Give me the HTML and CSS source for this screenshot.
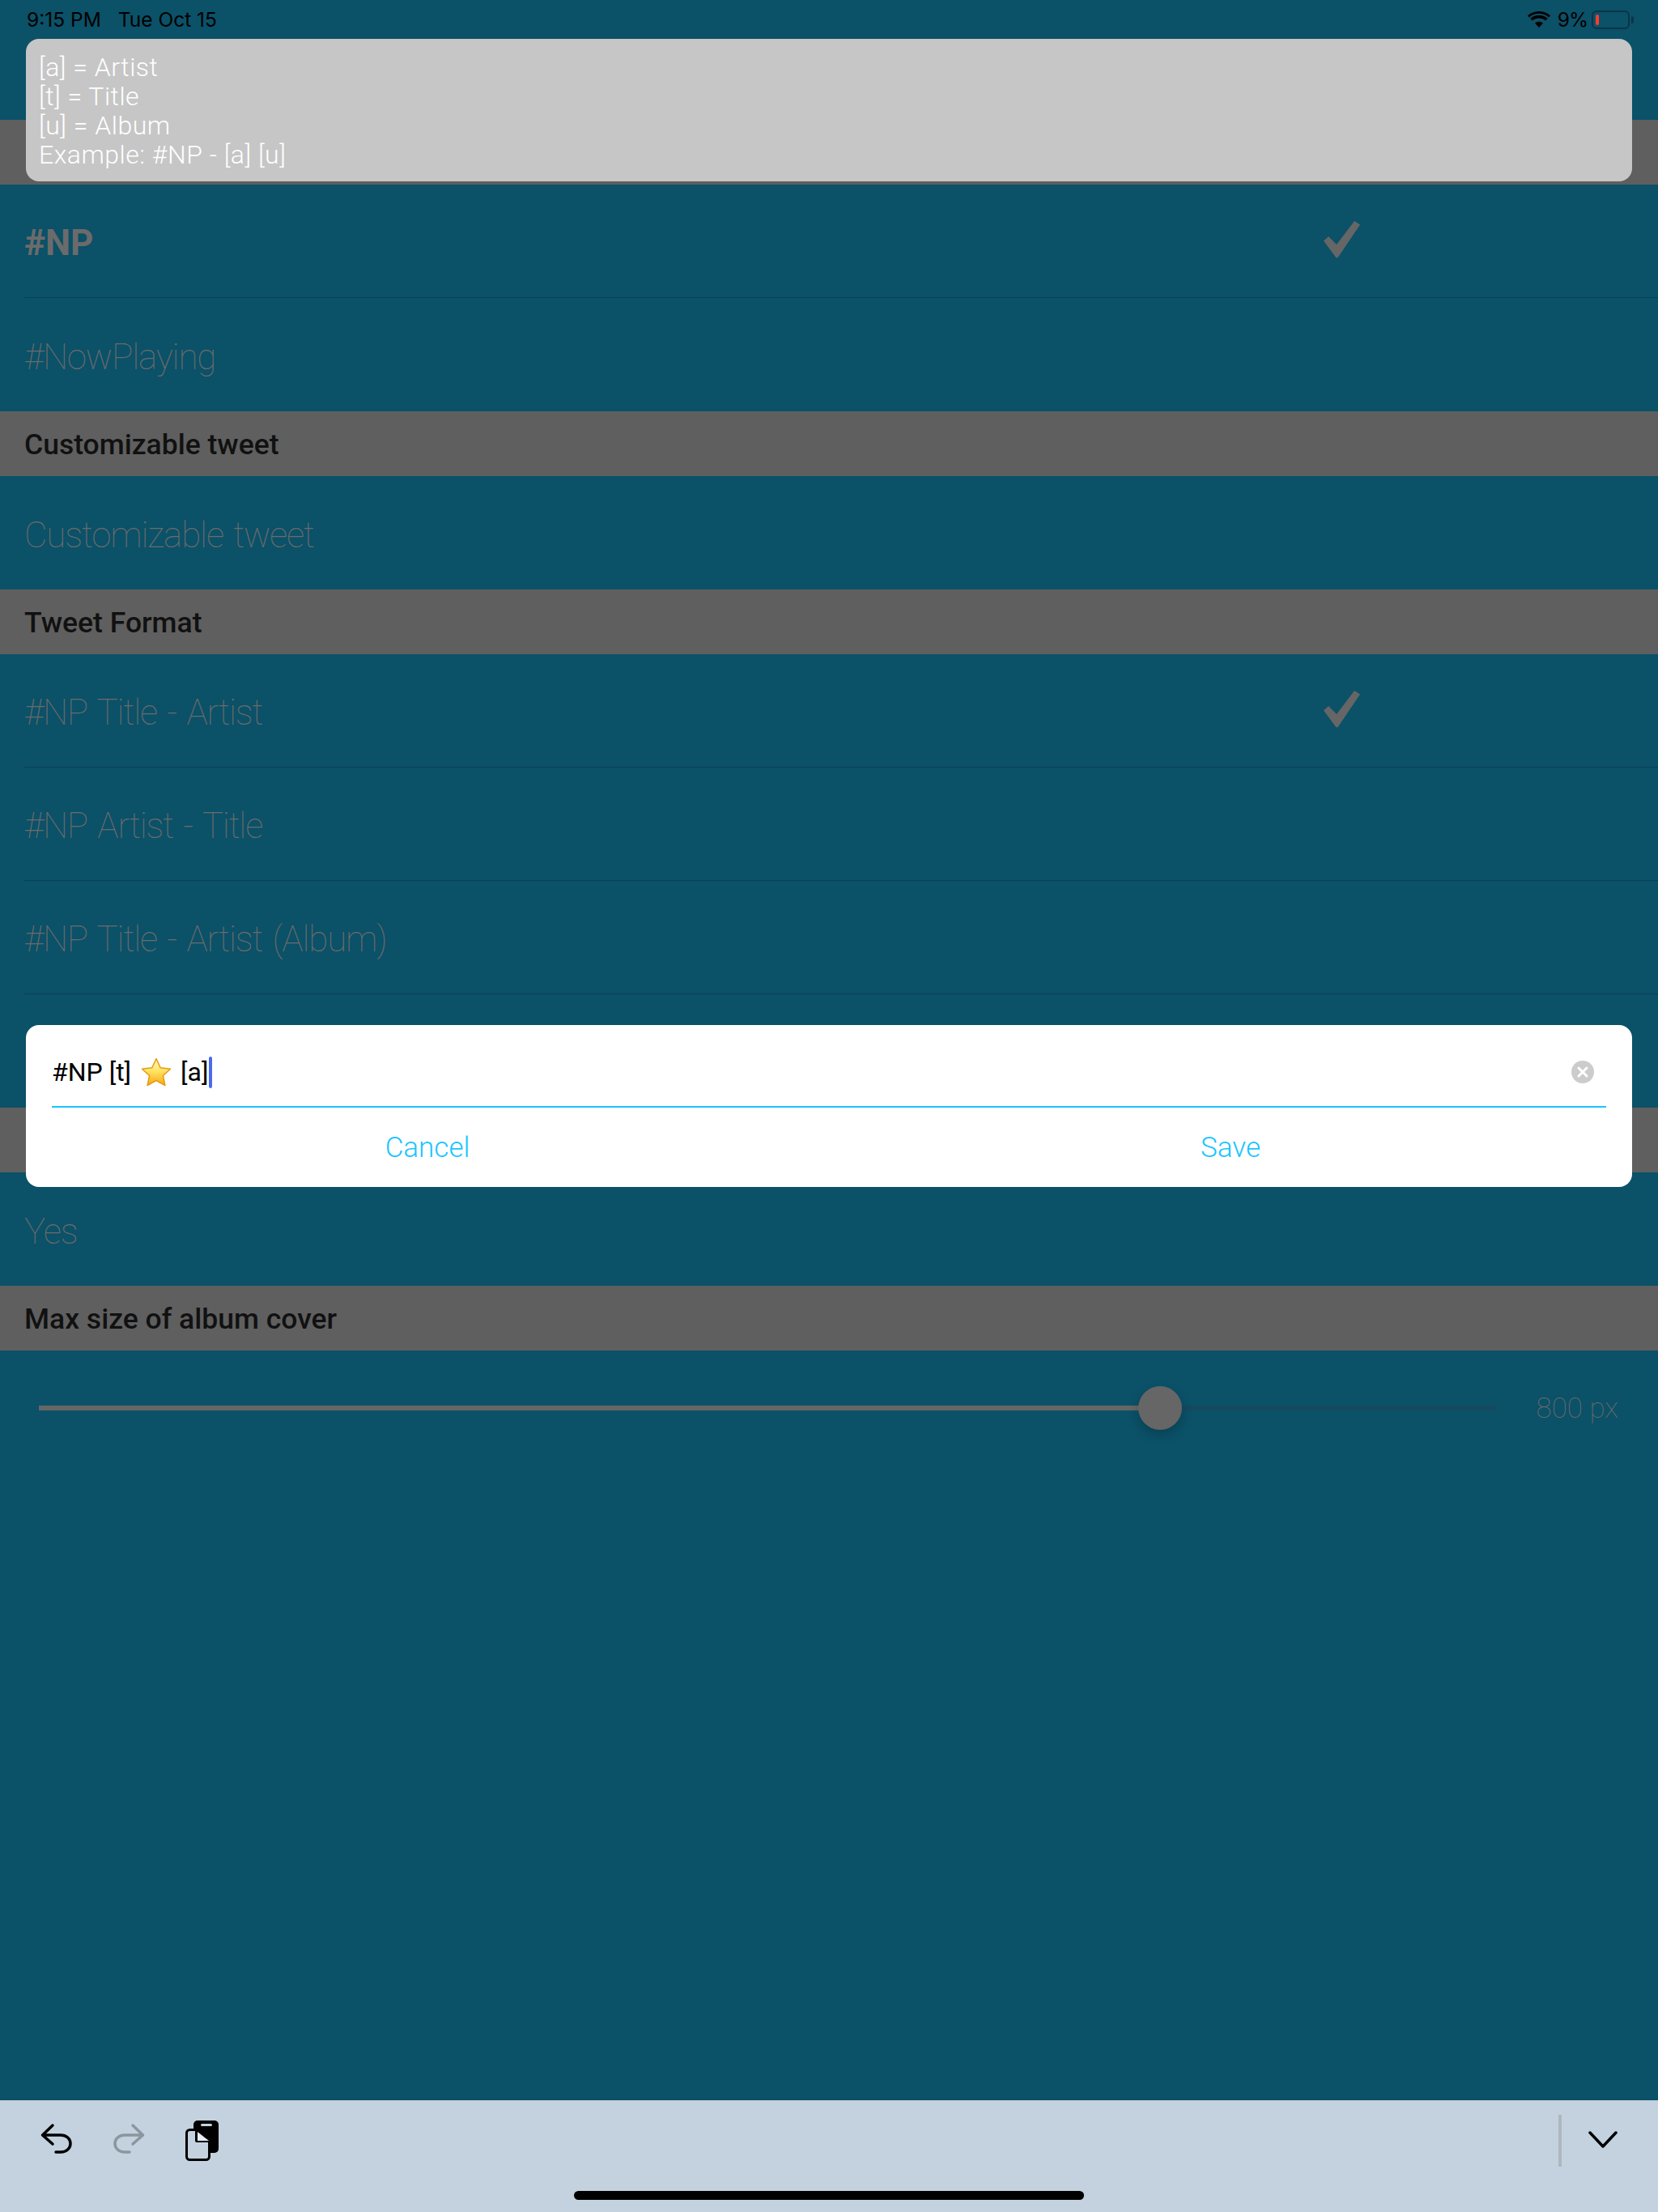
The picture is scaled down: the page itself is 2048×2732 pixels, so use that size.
FILE: index.html
```html
<!DOCTYPE html>
<html lang="en">
<head>
    <meta charset="UTF-8">
    <meta name="viewport" content="width=device-width, initial-scale=1.0">
    <title>Tweet settings</title>
    <link rel="stylesheet" href="styles.css">
</head>
<body>
    <div class="page">
        <div class="topbar">
            <div class="status">
                <span class="status-time">9:15 PM</span>
                <span class="status-date">Tue Oct 15</span>
                <span class="status-right">
                    <svg class="wifi" viewBox="0 0 28 20"><path d="M14 20l-5-5.400c2.900-2.500 7.100-2.500 10 0zM5.800 11.500L3.300 8.700c6-5.200 15.400-5.200 21.400 0l-2.500 2.800c-4.700-4-11.700-4-16.400 0zM0 5.300C7.900-1.800 20.100-1.800 28 5.300l-1.900 2.100C19.300 1.300 8.700 1.300 1.900 7.400z"/></svg>
                    <span class="battery-text">9%</span>
                    <span class="battery"><span class="battery-level"></span></span>
                    <span class="battery-nub"></span>
                </span>
            </div>
        </div>

        <div class="section-head"></div>
        <div class="row row-line">
            <span class="row-text row-text-bold">#NP</span>
            <svg class="check" viewBox="0 0 45 46"><path d="M0 24.500L6 19l10 10L38 0l7 4.500L18 44.500a2 2 0 0 1-3 .3z"/></svg>
        </div>
        <div class="row">
            <span class="row-text">#NowPlaying</span>
        </div>

        <div class="section-head">Customizable tweet</div>
        <div class="row">
            <span class="row-text">Customizable tweet</span>
        </div>

        <div class="section-head">Tweet Format</div>
        <div class="row row-line">
            <span class="row-text">#NP Title - Artist</span>
            <svg class="check" viewBox="0 0 45 46"><path d="M0 24.500L6 19l10 10L38 0l7 4.500L18 44.500a2 2 0 0 1-3 .3z"/></svg>
        </div>
        <div class="row row-line">
            <span class="row-text">#NP Artist - Title</span>
        </div>
        <div class="row row-line">
            <span class="row-text">#NP Title - Artist (Album)</span>
        </div>
        <div class="row"></div>

        <div class="section-head"></div>
        <div class="row">
            <span class="row-text">Yes</span>
        </div>

        <div class="section-head">Max size of album cover</div>
        <div class="slider-row">
            <div class="slider">
                <div class="slider-fill"></div>
                <div class="slider-rest"></div>
                <div class="slider-thumb"></div>
            </div>
            <span class="slider-value">800 px</span>
        </div>

        <div class="toolbar">
            <div class="toolbar-main">
                <svg class="tool-icon" viewBox="0 0 44 44"><path d="M17 5L4.500 17 17 28M5 17h22c7 0 12 4.500 12 10.500S34 38 27 38h-6"/></svg>
                <svg class="tool-icon tool-icon-off" viewBox="0 0 44 44"><path d="M27 5l12.500 12L27 28M39 17H17C10 17 5 21.500 5 27.500S10 38 17 38h6"/></svg>
                <svg class="paste-icon" viewBox="0 0 44 52">
                    <rect x="11" y="1" width="31" height="40" rx="5" fill="#000"/>
                    <rect x="20" y="5" width="14" height="3" rx="1.500" fill="#c3d2de"/>
                    <rect x="2.500" y="12.500" width="28" height="37" rx="4" fill="#c3d2de" stroke="#000" stroke-width="3"/>
                    <path d="M13 11h19v17H15a2 2 0 0 1-2-2z" fill="#000"/>
                    <path d="M16 15l14 11H16z" fill="#e8eef3"/>
                </svg>
                <span class="toolbar-space"></span>
                <span class="toolbar-divider"></span>
                <svg class="chevron" viewBox="0 0 36 22"><path d="M2 2l16 17L34 2"/></svg>
            </div>
            <div class="home-bar"></div>
        </div>

        <!-- Tooltip over the list -->
        <div class="hint">
            <div>[a] = Artist</div>
            <div>[t] = Title</div>
            <div>[u] = Album</div>
            <div>Example: #NP - [a] [u]</div>
        </div>

        <!-- Edit dialog -->
        <div class="dialog">
            <div class="dialog-input">
                <span class="input-text">#NP [t]</span>
                <svg class="star" viewBox="0 0 38 36">
                    <defs>
                        <linearGradient id="starFill" x1="0" y1="0" x2="0" y2="1">
                            <stop offset="0" stop-color="#fff6c8"/>
                            <stop offset="0.45" stop-color="#ffe566"/>
                            <stop offset="1" stop-color="#f9a80f"/>
                        </linearGradient>
                    </defs>
                    <path d="M19 1.500l5.200 11.300 12.300 1.400-9.100 8.300 2.500 12.100L19 28.500 8.100 34.600l2.500-12.100-9.100-8.300 12.300-1.400z" fill="url(#starFill)" stroke="#e59a12" stroke-width="1.500" stroke-linejoin="round"/>
                </svg>
                <span class="input-text">[a]</span>
                <span class="caret"></span>
                <span class="input-space"></span>
                <svg class="clear" viewBox="0 0 28 28"><circle cx="14" cy="14" r="14" fill="#ccc"/><path d="M9 9l10 10M19 9L9 19" stroke="#fff" stroke-width="3" stroke-linecap="round"/></svg>
            </div>
            <div class="dialog-buttons">
                <button class="dialog-btn">Cancel</button>
                <button class="dialog-btn">Save</button>
            </div>
        </div>
    </div>
</body>
</html>
```

FILE: styles.css
```css
* {
    box-sizing: border-box;
}

body {
    margin: 0;
    background: #0b5168;
    font-family: Roboto, "Liberation Sans", sans-serif;
}

.page {
    position: relative;
    display: flex;
    flex-direction: column;
    width: 2048px;
    height: 2732px;
    overflow: hidden;
    background: #0b5168;
}

.topbar {
    height: 148px;
}

.status {
    display: flex;
    align-items: center;
    height: 48px;
    padding-left: 33px;
    font-family: Inter, Roboto, sans-serif;
    font-size: 24.500px;
    color: #000;
}

.status-date {
    margin-left: 21px;
}

.status-right {
    display: flex;
    align-items: center;
    margin-left: auto;
    padding-right: 30px;
}

.wifi {
    width: 28px;
    height: 20px;
}

.battery-text {
    margin-left: 9px;
    letter-spacing: -1px;
}

.battery {
    display: block;
    width: 47px;
    height: 23px;
    margin-left: 5px;
    padding: 3px;
    border: 2px solid #0a3547;
    border-radius: 6px;
}

.battery-level {
    display: block;
    width: 4px;
    height: 100%;
    border-radius: 2px;
    background: #ff3b30;
}

.battery-nub {
    width: 3px;
    height: 9px;
    margin-left: 2px;
    border-radius: 0 3px 3px 0;
    background: #0a3547;
}

.section-head {
    flex: none;
    height: 80px;
    padding-left: 30px;
    background: #5f5f5f;
    font-size: 35.500px;
    font-weight: 500;
    line-height: 82px;
    color: #111;
}

.row {
    flex: none;
    display: flex;
    align-items: center;
    height: 140px;
    margin-left: 30px;
    padding-right: 368px;
}

.row-line {
    border-bottom: 1px solid #0a3f54;
}

.row-text {
    flex: 1;
    margin-top: 5px;
    font-size: 44px;
    font-weight: 100;
    letter-spacing: -1.200px;
    word-spacing: 3px;
    color: #6b6b6b;
}

.row-text-bold {
    font-weight: 700;
    letter-spacing: 0;
}

.check {
    width: 45px;
    height: 46px;
    margin-top: -4px;
    fill: #666;
}

.slider-row {
    flex: none;
    display: flex;
    align-items: center;
    height: 142px;
    padding: 0 49px 0 48px;
}

.slider {
    position: relative;
    display: flex;
    align-items: center;
    width: 1801px;
    height: 54px;
}

.slider-fill {
    width: 1385px;
    height: 6px;
    background: #666;
}

.slider-rest {
    flex: 1;
    height: 6px;
    border-radius: 0 3px 3px 0;
    background: #15495e;
}

.slider-thumb {
    position: absolute;
    top: 0;
    left: 1358px;
    width: 54px;
    height: 54px;
    border-radius: 50%;
    background: #666;
    box-shadow: 0 6px 14px rgba(0, 0, 0, 0.2);
}

.slider-value {
    margin-left: auto;
    font-size: 35px;
    font-weight: 100;
    color: #6b6b6b;
}

.toolbar {
    display: flex;
    flex-direction: column;
    height: 138px;
    margin-top: auto;
    background: #c3d2de;
}

.toolbar-main {
    display: flex;
    align-items: flex-start;
    height: 112px;
    padding: 26px 50px 0 48px;
}

.tool-icon {
    width: 44px;
    height: 44px;
    margin-right: 45px;
    fill: none;
    stroke: #000;
    stroke-width: 3.500;
    stroke-linecap: round;
    stroke-linejoin: round;
}

.tool-icon-off {
    stroke: #8a979f;
}

.paste-icon {
    width: 44px;
    height: 52px;
    margin: -2px 0 0 2px;
}

.toolbar-space {
    flex: 1;
}

.toolbar-divider {
    width: 4px;
    height: 64px;
    margin-top: -8px;
    background: #adb7bf;
}

.chevron {
    width: 36px;
    height: 22px;
    margin: 12px 0 0 33px;
    fill: none;
    stroke: #000;
    stroke-width: 3.500;
    stroke-linecap: round;
    stroke-linejoin: round;
}

.home-bar {
    align-self: center;
    width: 630px;
    height: 11px;
    border-radius: 6px;
    background: #000;
}

.hint {
    position: absolute;
    top: 48px;
    left: 32px;
    right: 32px;
    height: 176px;
    padding: 17px 16px;
    border-radius: 16px;
    background: #c6c6c6;
    font-size: 32px;
    font-weight: 300;
    letter-spacing: 0.500px;
    line-height: 36px;
    color: #fff;
}

.dialog {
    position: absolute;
    top: 1266px;
    left: 32px;
    right: 32px;
    height: 200px;
    padding: 0 32px;
    border-radius: 16px;
    background: #fff;
}

.dialog-input {
    display: flex;
    align-items: center;
    height: 102px;
    padding: 16px 15px 0 0;
    border-bottom: 2px solid #19c5ff;
}

.input-text {
    font-size: 32px;
    color: #000;
}

.star {
    width: 38px;
    height: 36px;
    margin: 0 11px 0 12px;
}

.caret {
    width: 4px;
    height: 39px;
    margin-left: 1px;
    border-radius: 2px;
    background: #4a69f0;
}

.input-space {
    flex: 1;
}

.clear {
    width: 28px;
    height: 28px;
}

.dialog-buttons {
    display: grid;
    grid-template-columns: 1fr 1fr;
    height: 98px;
    margin: 0 -32px;
}

.dialog-btn {
    border: none;
    background: none;
    font-family: Roboto, "Liberation Sans", sans-serif;
    font-size: 35px;
    font-weight: 300;
    color: #19c5ff;
}
```
